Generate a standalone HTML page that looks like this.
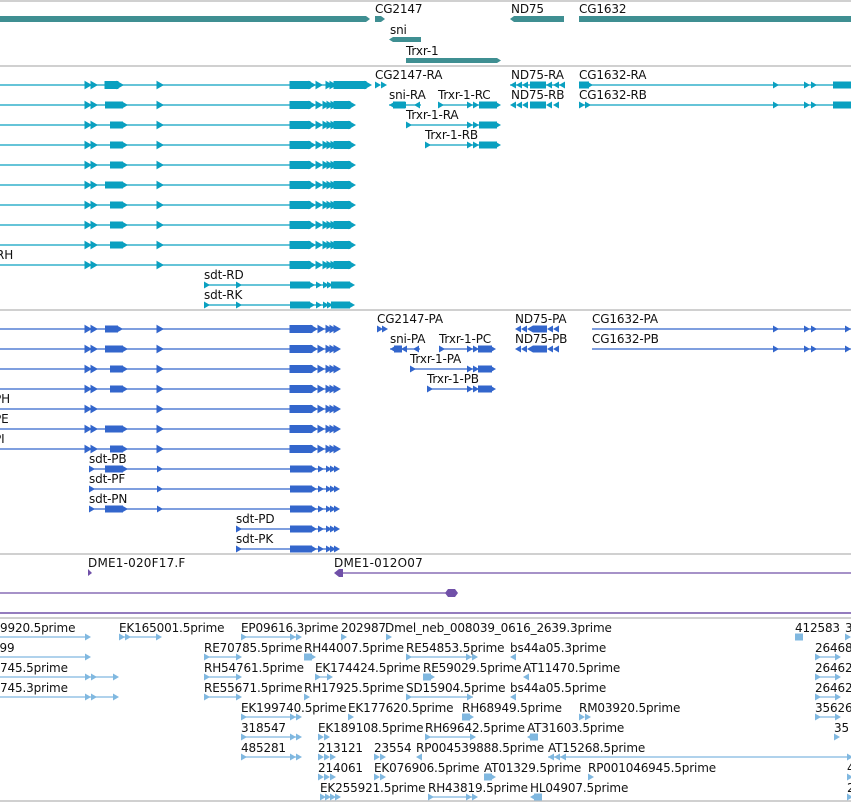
<!DOCTYPE html>
<html><head><meta charset="utf-8"><style>
html,body{margin:0;padding:0;background:#fff;}
svg{display:block;}
text{font-family:"DejaVu Sans","Liberation Sans",sans-serif;font-size:12px;letter-spacing:-0.15px;fill:#111;}
</style></head><body>
<svg width="851" height="802" viewBox="0 0 851 802" xmlns="http://www.w3.org/2000/svg">
<defs>
<polygon id="ar" points="0,-3.5 6,0 0,3.5"/>
<polygon id="al" points="6,-3.5 0,0 6,3.5"/>
<g id="tA">
 <line x1="0" y1="0" x2="368" y2="0" stroke-width="1.2"/>
 <use href="#ar" x="85"/><use href="#ar" x="91"/>
 <rect x="105" y="-3.5" width="13" height="7"/><use href="#ar" x="117"/>
 <use href="#ar" x="157"/>
 <rect x="290" y="-3.5" width="20" height="7"/><use href="#ar" x="309"/><use href="#ar" x="316"/>
 <use href="#ar" x="326"/><use href="#ar" x="330"/>
 <rect x="334" y="-3.5" width="32" height="7"/><use href="#ar" x="365"/>
</g>
<g id="tB">
 <line x1="0" y1="0" x2="352" y2="0" stroke-width="1.2"/>
 <use href="#ar" x="85"/><use href="#ar" x="91"/>
 <use href="#ar" x="157"/>
 <rect x="290" y="-3.5" width="20" height="7"/><use href="#ar" x="309"/><use href="#ar" x="316"/>
 <use href="#ar" x="323"/><use href="#ar" x="327"/><use href="#ar" x="331"/>
 <rect x="334" y="-3.5" width="16" height="7"/><use href="#ar" x="349"/>
</g>
<g id="pA">
 <line x1="0" y1="0" x2="338" y2="0" stroke-width="1.2"/>
 <use href="#ar" x="85"/><use href="#ar" x="91"/>
 <use href="#ar" x="157"/>
 <rect x="290" y="-3.5" width="22" height="7"/><use href="#ar" x="311"/><use href="#ar" x="318"/>
 <use href="#ar" x="326"/><use href="#ar" x="330"/><use href="#ar" x="334"/>
</g>
</defs>

<g stroke="#c0c0c0" stroke-width="1.5">
<line x1="0" y1="1" x2="851" y2="1"/>
<line x1="0" y1="66" x2="851" y2="66"/>
<line x1="0" y1="310" x2="851" y2="310"/>
<line x1="0" y1="554" x2="851" y2="554"/>
<line x1="0" y1="618" x2="851" y2="618"/>
<line x1="0" y1="801" x2="851" y2="801"/>
</g>

<g fill="#3f8f92">
<polygon points="0,16 366,16 370,19 366,22 0,22"/>
<polygon points="375,16 381,16 385,19 381,22 375,22"/>
<polygon points="393,37 421,37 421,42 393,42 389,39.5"/>
<polygon points="406,58 497,58 501,60.5 497,63 406,63"/>
<polygon points="514,16 564,16 564,22 514,22 510,19"/>
<rect x="579" y="16" width="272" height="6"/>
</g>
<text x="375" y="13">CG2147</text>
<text x="390" y="34">sni</text>
<text x="406" y="55">Trxr-1</text>
<text x="511" y="13">ND75</text>
<text x="579" y="13">CG1632</text>

<g fill="#0aa0c0" stroke="#0aa0c0">
<use href="#tA" y="85"/>
<use href="#tB" y="105"/>
<use href="#tB" y="125"/>
<use href="#tB" y="145"/>
<use href="#tB" y="165"/>
<use href="#tB" y="185"/>
<use href="#tB" y="205"/>
<use href="#tB" y="225"/>
<use href="#tB" y="245"/>
<use href="#tB" y="265"/>
</g>
<g fill="#0aa0c0" stroke="none">
<rect x="105" y="101.5" width="18" height="7"/><use href="#ar" x="122" y="105"/>
<rect x="110" y="121.5" width="13" height="7"/><use href="#ar" x="122" y="125"/>
<rect x="110" y="141.5" width="13" height="7"/><use href="#ar" x="122" y="145"/>
<rect x="110" y="161.5" width="13" height="7"/><use href="#ar" x="122" y="165"/>
<rect x="105" y="181.5" width="18" height="7"/><use href="#ar" x="122" y="185"/>
<rect x="110" y="201.5" width="13" height="7"/><use href="#ar" x="122" y="205"/>
<rect x="110" y="221.5" width="13" height="7"/><use href="#ar" x="122" y="225"/>
<rect x="110" y="241.5" width="13" height="7"/><use href="#ar" x="122" y="245"/>
</g>
<g fill="#0aa0c0" stroke="#0aa0c0">
<line x1="204" y1="285" x2="352" y2="285" stroke-width="1.2"/>
<line x1="204" y1="305" x2="352" y2="305" stroke-width="1.2"/>
<g stroke="none">
<use href="#ar" x="204" y="285"/><use href="#ar" x="236" y="285"/>
<use href="#ar" x="204" y="305"/><use href="#ar" x="236" y="305"/>
<rect x="290" y="281.5" width="20" height="7"/><use href="#ar" x="309" y="285"/><use href="#ar" x="316" y="285"/><use href="#ar" x="323" y="285"/><use href="#ar" x="327" y="285"/><rect x="331" y="281.5" width="19" height="7"/><use href="#ar" x="349" y="285"/>
<rect x="290" y="301.5" width="20" height="7"/><use href="#ar" x="309" y="305"/><use href="#ar" x="316" y="305"/><use href="#ar" x="323" y="305"/><use href="#ar" x="327" y="305"/><rect x="331" y="301.5" width="19" height="7"/><use href="#ar" x="349" y="305"/>
<use href="#ar" x="375" y="85"/><use href="#ar" x="381" y="85"/>
<rect x="393" y="101.5" width="12" height="7"/><use href="#al" x="389" y="105"/><use href="#al" x="400" y="105"/><use href="#al" x="414" y="105"/>
<use href="#ar" x="438" y="105"/><use href="#ar" x="467" y="105"/><use href="#ar" x="473" y="105"/><rect x="479" y="101.5" width="18" height="7"/><use href="#ar" x="495" y="105"/>
<use href="#ar" x="406" y="125"/><use href="#ar" x="467" y="125"/><use href="#ar" x="473" y="125"/><rect x="479" y="121.5" width="18" height="7"/><use href="#ar" x="495" y="125"/>
<use href="#ar" x="425" y="145"/><use href="#ar" x="467" y="145"/><use href="#ar" x="473" y="145"/><rect x="479" y="141.5" width="18" height="7"/><use href="#ar" x="495" y="145"/>
<use href="#al" x="510" y="85"/><use href="#al" x="516" y="85"/><use href="#al" x="522" y="85"/><rect x="530" y="81.5" width="16" height="7"/><use href="#al" x="546" y="85"/><use href="#al" x="553" y="85"/><use href="#al" x="559" y="85"/>
<use href="#al" x="510" y="105"/><use href="#al" x="516" y="105"/><use href="#al" x="522" y="105"/><rect x="530" y="101.5" width="16" height="7"/><use href="#al" x="546" y="105"/><use href="#al" x="553" y="105"/>
<rect x="579" y="81.5" width="10" height="7"/><use href="#ar" x="587" y="85"/>
<use href="#ar" x="579" y="105"/><use href="#ar" x="585" y="105"/>
<use href="#ar" x="773" y="85"/><use href="#ar" x="804" y="85"/><use href="#ar" x="811" y="85"/><rect x="833" y="81.5" width="18" height="7"/>
<use href="#ar" x="773" y="105"/><use href="#ar" x="804" y="105"/><use href="#ar" x="811" y="105"/><rect x="833" y="101.5" width="18" height="7"/>
</g>
<line x1="389" y1="105" x2="421" y2="105" stroke-width="1.2"/>
<line x1="438" y1="105" x2="497" y2="105" stroke-width="1.2"/>
<line x1="406" y1="125" x2="497" y2="125" stroke-width="1.2"/>
<line x1="425" y1="145" x2="497" y2="145" stroke-width="1.2"/>
<line x1="510" y1="85" x2="565" y2="85" stroke-width="1.2"/>
<line x1="579" y1="85" x2="851" y2="85" stroke-width="1.2"/>
<line x1="579" y1="105" x2="851" y2="105" stroke-width="1.2"/>
</g>
<text x="375" y="79">CG2147-RA</text>
<text x="389" y="99">sni-RA</text>
<text x="438" y="99">Trxr-1-RC</text>
<text x="406" y="119">Trxr-1-RA</text>
<text x="425" y="139">Trxr-1-RB</text>
<text x="511" y="79">ND75-RA</text>
<text x="511" y="99">ND75-RB</text>
<text x="579" y="79">CG1632-RA</text>
<text x="579" y="99">CG1632-RB</text>
<text x="-4" y="259">RH</text>
<text x="204" y="279">sdt-RD</text>
<text x="204" y="299">sdt-RK</text>

<g fill="#3366cc" stroke="#3366cc">
<use href="#pA" y="329"/>
<use href="#pA" y="349"/>
<use href="#pA" y="369"/>
<use href="#pA" y="389"/>
<use href="#pA" y="409"/>
<use href="#pA" y="429"/>
<use href="#pA" y="449"/>
<line x1="89" y1="469" x2="338" y2="469" stroke-width="1.2"/>
<line x1="89" y1="489" x2="338" y2="489" stroke-width="1.2"/>
<line x1="89" y1="509" x2="338" y2="509" stroke-width="1.2"/>
<line x1="236" y1="529" x2="338" y2="529" stroke-width="1.2"/>
<line x1="236" y1="549" x2="338" y2="549" stroke-width="1.2"/>
<g stroke="none">
<rect x="105" y="325.5" width="13" height="7"/><use href="#ar" x="117" y="329"/>
<rect x="105" y="345.5" width="18" height="7"/><use href="#ar" x="122" y="349"/>
<rect x="110" y="365.5" width="13" height="7"/><use href="#ar" x="122" y="369"/>
<rect x="110" y="385.5" width="13" height="7"/><use href="#ar" x="122" y="389"/>
<rect x="105" y="425.5" width="18" height="7"/><use href="#ar" x="122" y="429"/>
<rect x="110" y="445.5" width="13" height="7"/><use href="#ar" x="122" y="449"/>
<use href="#ar" x="89" y="469"/><rect x="105" y="465.5" width="18" height="7"/><use href="#ar" x="122" y="469"/><use href="#ar" x="157" y="469"/>
<use href="#ar" x="89" y="489"/><use href="#ar" x="157" y="489"/>
<use href="#ar" x="89" y="509"/><rect x="105" y="505.5" width="18" height="7"/><use href="#ar" x="122" y="509"/><use href="#ar" x="157" y="509"/>
<use href="#ar" x="236" y="529"/><use href="#ar" x="236" y="549"/>
<g transform="translate(0,469)"><rect x="290" y="-3.5" width="22" height="7"/><use href="#ar" x="311"/><use href="#ar" x="318"/><use href="#ar" x="326"/><use href="#ar" x="330"/><use href="#ar" x="334"/></g>
<g transform="translate(0,489)"><rect x="290" y="-3.5" width="22" height="7"/><use href="#ar" x="311"/><use href="#ar" x="318"/><use href="#ar" x="326"/><use href="#ar" x="330"/><use href="#ar" x="334"/></g>
<g transform="translate(0,509)"><rect x="290" y="-3.5" width="22" height="7"/><use href="#ar" x="311"/><use href="#ar" x="318"/><use href="#ar" x="326"/><use href="#ar" x="330"/><use href="#ar" x="334"/></g>
<g transform="translate(0,529)"><rect x="290" y="-3.5" width="22" height="7"/><use href="#ar" x="311"/><use href="#ar" x="318"/><use href="#ar" x="326"/><use href="#ar" x="330"/><use href="#ar" x="334"/></g>
<g transform="translate(0,549)"><rect x="290" y="-3.5" width="22" height="7"/><use href="#ar" x="311"/><use href="#ar" x="318"/><use href="#ar" x="326"/><use href="#ar" x="330"/><use href="#ar" x="334"/></g>
<use href="#ar" x="377" y="329"/><use href="#ar" x="382" y="329"/>
<use href="#al" x="390" y="349"/><rect x="394" y="345.5" width="8" height="7"/><use href="#al" x="401" y="349"/><use href="#al" x="413" y="349"/>
<use href="#ar" x="439" y="349"/><use href="#ar" x="467" y="349"/><use href="#ar" x="473" y="349"/><rect x="478" y="345.5" width="14" height="7"/><use href="#ar" x="490" y="349"/>
<use href="#ar" x="410" y="369"/><use href="#ar" x="467" y="369"/><use href="#ar" x="473" y="369"/><rect x="478" y="365.5" width="14" height="7"/><use href="#ar" x="490" y="369"/>
<use href="#ar" x="427" y="389"/><use href="#ar" x="467" y="389"/><use href="#ar" x="473" y="389"/><rect x="478" y="385.5" width="14" height="7"/><use href="#ar" x="490" y="389"/>
<use href="#al" x="515" y="329"/><use href="#al" x="521" y="329"/><use href="#al" x="527" y="329"/><rect x="533" y="325.5" width="14" height="7"/><use href="#al" x="547" y="329"/><use href="#al" x="553" y="329"/>
<use href="#al" x="515" y="349"/><use href="#al" x="521" y="349"/><use href="#al" x="527" y="349"/><rect x="533" y="345.5" width="14" height="7"/><use href="#al" x="547" y="349"/><use href="#al" x="553" y="349"/>
<use href="#ar" x="773" y="329"/><use href="#ar" x="804" y="329"/><use href="#ar" x="811" y="329"/><use href="#ar" x="845" y="329"/>
<use href="#ar" x="773" y="349"/><use href="#ar" x="804" y="349"/><use href="#ar" x="811" y="349"/><use href="#ar" x="845" y="349"/>
</g>
<line x1="390" y1="349" x2="420" y2="349" stroke-width="1.2"/>
<line x1="439" y1="349" x2="494" y2="349" stroke-width="1.2"/>
<line x1="410" y1="369" x2="494" y2="369" stroke-width="1.2"/>
<line x1="427" y1="389" x2="494" y2="389" stroke-width="1.2"/>
<line x1="592" y1="329" x2="851" y2="329" stroke-width="1.2"/>
<line x1="592" y1="349" x2="851" y2="349" stroke-width="1.2"/>
</g>
<text x="377" y="323">CG2147-PA</text>
<text x="390" y="343">sni-PA</text>
<text x="439" y="343">Trxr-1-PC</text>
<text x="410" y="363">Trxr-1-PA</text>
<text x="427" y="383">Trxr-1-PB</text>
<text x="515" y="323">ND75-PA</text>
<text x="515" y="343">ND75-PB</text>
<text x="592" y="323">CG1632-PA</text>
<text x="592" y="343">CG1632-PB</text>
<text x="-6" y="403">PH</text>
<text x="-6" y="423">PE</text>
<text x="-6" y="443">PI</text>
<text x="89" y="463">sdt-PB</text>
<text x="89" y="483">sdt-PF</text>
<text x="89" y="503">sdt-PN</text>
<text x="236" y="523">sdt-PD</text>
<text x="236" y="543">sdt-PK</text>

<g fill="#7050a8" stroke="#7050a8">
<polygon points="88,569 92,573 88,576" stroke="none"/>
<line x1="338" y1="573" x2="851" y2="573" stroke-width="1.2"/>
<polygon points="334,573 339,569 343,569 343,577 339,577" stroke="none"/>
<line x1="0" y1="593" x2="452" y2="593" stroke-width="1.2"/>
<polygon points="448,589 455,589 458,593 455,597 448,597 445,593" stroke="none"/>
<line x1="0" y1="613" x2="851" y2="613" stroke-width="1.5"/>
</g>
<text x="88" y="567" style="letter-spacing:0.2px">DME1-020F17.F</text>
<text x="334" y="567" style="letter-spacing:0.2px">DME1-012O07</text>

<g fill="#80b8e0" stroke="#80b8e0">
<g stroke-width="1.2">
<line x1="0" y1="637" x2="88" y2="637"/>
<line x1="119" y1="637" x2="160" y2="637"/>
<line x1="241" y1="637" x2="298" y2="637"/>
<line x1="0" y1="657" x2="88" y2="657"/>
<line x1="204" y1="657" x2="240" y2="657"/>
<line x1="406" y1="657" x2="473" y2="657"/>
<line x1="0" y1="677" x2="117" y2="677"/>
<line x1="204" y1="677" x2="240" y2="677"/>
<line x1="315" y1="677" x2="330" y2="677"/>
<line x1="0" y1="697" x2="117" y2="697"/>
<line x1="204" y1="697" x2="240" y2="697"/>
<line x1="406" y1="697" x2="473" y2="697"/>
<line x1="241" y1="717" x2="298" y2="717"/>
<line x1="241" y1="737" x2="298" y2="737"/>
<line x1="425" y1="737" x2="475" y2="737"/>
<line x1="241" y1="757" x2="298" y2="757"/>
<line x1="548" y1="757" x2="851" y2="757"/>
<line x1="428" y1="797" x2="475" y2="797"/>
<line x1="815" y1="657" x2="838" y2="657"/>
<line x1="815" y1="677" x2="838" y2="677"/>
<line x1="815" y1="697" x2="838" y2="697"/>
<line x1="815" y1="717" x2="838" y2="717"/>
</g>
<g stroke="none">
<use href="#ar" x="85" y="637"/><use href="#ar" x="119" y="637"/><use href="#ar" x="125" y="637"/><use href="#ar" x="156" y="637"/>
<use href="#ar" x="241" y="637"/><use href="#ar" x="290" y="637"/><use href="#ar" x="296" y="637"/><use href="#ar" x="341" y="637"/><use href="#ar" x="386" y="637"/>
<use href="#ar" x="795" y="637"/><rect x="795" y="633.5" width="8" height="7"/><use href="#ar" x="845" y="637"/>
<use href="#ar" x="85" y="657"/><use href="#ar" x="204" y="657"/><use href="#ar" x="236" y="657"/><rect x="304" y="653.5" width="8" height="7"/><use href="#ar" x="310" y="657"/><use href="#ar" x="406" y="657"/><use href="#ar" x="466" y="657"/><use href="#ar" x="472" y="657"/><use href="#al" x="510" y="657"/><use href="#ar" x="815" y="657"/><use href="#ar" x="835" y="657"/>
<use href="#ar" x="85" y="677"/><use href="#ar" x="91" y="677"/><use href="#ar" x="113" y="677"/><use href="#ar" x="204" y="677"/><use href="#ar" x="236" y="677"/><use href="#ar" x="315" y="677"/><use href="#ar" x="327" y="677"/><rect x="423" y="673.5" width="8" height="7"/><use href="#ar" x="429" y="677"/><use href="#al" x="523" y="677"/><use href="#ar" x="815" y="677"/><use href="#ar" x="835" y="677"/>
<use href="#ar" x="85" y="697"/><use href="#ar" x="91" y="697"/><use href="#ar" x="113" y="697"/><use href="#ar" x="204" y="697"/><use href="#ar" x="236" y="697"/><use href="#ar" x="304" y="697"/><use href="#ar" x="406" y="697"/><use href="#ar" x="467" y="697"/><use href="#al" x="510" y="697"/><use href="#ar" x="815" y="697"/><use href="#ar" x="835" y="697"/>
<use href="#ar" x="241" y="717"/><use href="#ar" x="290" y="717"/><use href="#ar" x="296" y="717"/><use href="#ar" x="348" y="717"/><rect x="462" y="713.5" width="8" height="7"/><use href="#ar" x="468" y="717"/><use href="#ar" x="579" y="717"/><use href="#ar" x="585" y="717"/><use href="#ar" x="815" y="717"/><use href="#ar" x="835" y="717"/>
<use href="#ar" x="241" y="737"/><use href="#ar" x="290" y="737"/><use href="#ar" x="296" y="737"/><use href="#ar" x="318" y="737"/><use href="#ar" x="324" y="737"/><use href="#ar" x="425" y="737"/><use href="#ar" x="470" y="737"/><rect x="530" y="733.5" width="8" height="7"/><use href="#al" x="527" y="737"/><use href="#ar" x="834" y="737"/>
<use href="#ar" x="241" y="757"/><use href="#ar" x="290" y="757"/><use href="#ar" x="296" y="757"/><use href="#ar" x="318" y="757"/><use href="#ar" x="324" y="757"/><use href="#ar" x="330" y="757"/><use href="#ar" x="374" y="757"/><use href="#ar" x="380" y="757"/><use href="#al" x="416" y="757"/><use href="#al" x="548" y="757"/><use href="#al" x="554" y="757"/><use href="#al" x="560" y="757"/><use href="#ar" x="847" y="757"/>
<use href="#ar" x="318" y="777"/><use href="#ar" x="324" y="777"/><use href="#ar" x="330" y="777"/><use href="#ar" x="374" y="777"/><use href="#ar" x="380" y="777"/><rect x="484" y="773.5" width="8" height="7"/><use href="#ar" x="490" y="777"/><use href="#ar" x="588" y="777"/><use href="#ar" x="847" y="777"/>
<use href="#ar" x="320" y="797"/><use href="#ar" x="325" y="797"/><use href="#ar" x="330" y="797"/><use href="#ar" x="335" y="797"/><use href="#ar" x="428" y="797"/><use href="#ar" x="466" y="797"/><use href="#ar" x="472" y="797"/><rect x="534" y="793.5" width="8" height="7"/><use href="#al" x="530" y="797"/><use href="#ar" x="847" y="797"/>
</g>
</g>
<text x="0" y="632">9920.5prime</text>
<text x="119" y="632">EK165001.5prime</text>
<text x="241" y="632">EP09616.3prime</text>
<text x="341" y="632">202987</text>
<text x="385" y="632">Dmel_neb_008039_0616_2639.3prime</text>
<text x="795" y="632">412583</text>
<text x="845" y="632">3</text>
<text x="-8" y="652">399</text>
<text x="204" y="652">RE70785.5prime</text>
<text x="304" y="652">RH44007.5prime</text>
<text x="406" y="652">RE54853.5prime</text>
<text x="510" y="652">bs44a05.3prime</text>
<text x="815" y="652">26468</text>
<text x="0" y="672">745.5prime</text>
<text x="204" y="672">RH54761.5prime</text>
<text x="315" y="672">EK174424.5prime</text>
<text x="423" y="672">RE59029.5prime</text>
<text x="523" y="672">AT11470.5prime</text>
<text x="815" y="672">26462</text>
<text x="0" y="692">745.3prime</text>
<text x="204" y="692">RE55671.5prime</text>
<text x="304" y="692">RH17925.5prime</text>
<text x="406" y="692">SD15904.5prime</text>
<text x="510" y="692">bs44a05.5prime</text>
<text x="815" y="692">26462</text>
<text x="241" y="712">EK199740.5prime</text>
<text x="348" y="712">EK177620.5prime</text>
<text x="462" y="712">RH68949.5prime</text>
<text x="579" y="712">RM03920.5prime</text>
<text x="815" y="712">35626</text>
<text x="241" y="732">318547</text>
<text x="318" y="732">EK189108.5prime</text>
<text x="425" y="732">RH69642.5prime</text>
<text x="527" y="732">AT31603.5prime</text>
<text x="834" y="732">35</text>
<text x="241" y="752">485281</text>
<text x="318" y="752">213121</text>
<text x="374" y="752">23554</text>
<text x="416" y="752">RP004539888.5prime</text>
<text x="548" y="752">AT15268.5prime</text>
<text x="318" y="772">214061</text>
<text x="374" y="772">EK076906.5prime</text>
<text x="484" y="772">AT01329.5prime</text>
<text x="588" y="772">RP001046945.5prime</text>
<text x="847" y="772">4</text>
<text x="320" y="792">EK255921.5prime</text>
<text x="428" y="792">RH43819.5prime</text>
<text x="530" y="792">HL04907.5prime</text>
<text x="847" y="792">2</text>
</svg>
</body></html>
